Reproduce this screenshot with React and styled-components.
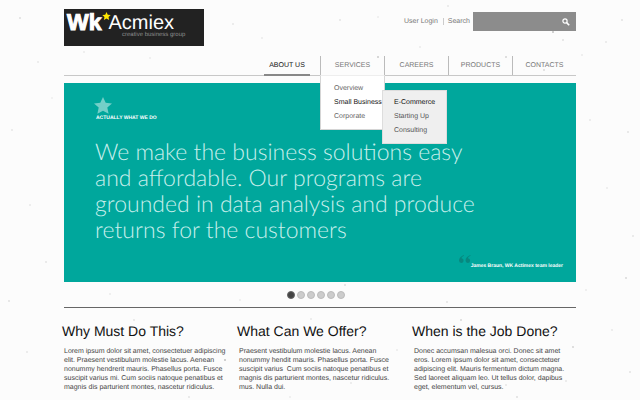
import React from "react";
import styled, { createGlobalStyle, css } from "styled-components";

const teal = "#00a79c";

const specks = [
  [20, 18, 30], [38, 62, 20], [12, 130, 22], [52, 98, 14], [30, 205, 20], [46, 262, 24], [9, 301, 28],
  [27, 352, 22], [134, 320, 24], [225, 360, 60], [150, 58, 16], [233, 24, 22], [262, 38, 18], [340, 20, 24],
  [378, 57, 50], [378, 17, 16], [420, 47, 18], [506, 57, 40], [544, 70, 34], [553, 32, 60], [563, 40, 28],
  [582, 55, 18], [606, 42, 22], [622, 20, 26], [590, 120, 20], [628, 132, 26], [607, 188, 18], [633, 236, 24],
  [626, 278, 36], [586, 290, 18], [447, 302, 26], [345, 285, 30], [311, 319, 20], [461, 320, 36], [552, 359, 60],
  [573, 347, 40], [566, 381, 22], [517, 397, 30], [506, 385, 22], [189, 397, 24], [351, 383, 20], [397, 350, 18],
  [612, 330, 20], [630, 372, 26], [240, 300, 16], [110, 294, 18], [84, 52, 18], [290, 397, 16], [448, 6, 22],
].map(([x, y, a]) => `radial-gradient(circle at ${x}px ${y}px, rgba(0,0,0,${a / 100}) 0, transparent 1px)`).join(",");

const GlobalStyle = createGlobalStyle`
  * { box-sizing: border-box; }
  body {
    margin: 0;
    min-height: 100vh;
    overflow: hidden;
    background: ${specks}, #fcfcfc;
    color: #444;
    font: 7px/9px "Liberation Sans", Arial, sans-serif;
    text-rendering: geometricPrecision;
  }
  ul { list-style: none; margin: 0; padding: 0; }
  a { color: inherit; text-decoration: none; }
  h1, h2, p { margin: 0; font-weight: 400; }
`;

const Page = styled.div`
  max-width: 512px;
  margin: 0 auto;
  padding-top: 9px;
`;

const Header = styled.header`
  display: flex;
  justify-content: space-between;
  align-items: flex-start;
`;

const Logo = styled.a`
  width: 140px;
  height: 37px;
  background: #222;
  color: #fff;
`;

const LogoName = styled.span`
  display: flex;
  align-items: flex-start;
  padding: 3px 0 0 3px;
  font-size: 20px;
  line-height: 22px;
  svg { width: 9px; height: 8px; margin-right: -2px; }
`;

const LogoMark = styled.b`
  font-size: 23px;
  line-height: 20px;
  font-weight: 700;
  -webkit-text-stroke: 1px #fff;
`;

const LogoTag = styled.small`
  display: block;
  padding-left: 58px;
  font-size: 6px;
  line-height: 3px;
  color: #8d8d8d;
`;

const Tools = styled.form`
  display: flex;
  align-items: center;
  margin-top: 3px;
  color: #777;
`;

const ToolLabel = styled.label`
  margin: 0 3px 0 5px;
  padding-left: 4px;
  border-left: 1px solid #ccc;
  line-height: 7px;
`;

const LoginLink = styled.a``;

const SearchBox = styled.span`
  display: flex;
  width: 103px;
  height: 19px;
  background: #8c8c8c;
`;

const SearchInput = styled.input`
  flex: 1;
  min-width: 0;
  border: 0;
  padding: 0 5px;
  background: none;
  color: #fff;
  font: inherit;
  outline: none;
`;

const SearchButton = styled.button`
  display: grid;
  place-items: center;
  width: 20px;
  border: 0;
  padding: 0;
  background: none;
  svg { width: 8px; height: 8px; }
`;

const Nav = styled.nav`
  margin-top: 10px;
  border-bottom: 1px solid #c8c8c8;
`;

const NavList = styled.ul`
  display: flex;
  justify-content: flex-end;
`;

const NavItem = styled.li`
  position: relative;
  width: ${(p) => p.$width || 64}px;
  height: 19px;
  line-height: 19px;
  text-align: center;
  color: #777;
  ${(p) => !p.$current && css`border-left: 1px solid #bbb;`}
  ${(p) => p.$current && css`
    margin: 0 10px -1px 0;
    height: 20px;
    color: #111;
    border-bottom: 2px solid #888;
  `}
`;

const Menu = styled.ul`
  position: absolute;
  z-index: 2;
  top: 19px;
  left: -1px;
  width: 65px;
  padding: 6px 0 5px 13px;
  background: #fff;
  border: 1px solid #d5d5d5;
  border-top-color: #eee;
  text-align: left;
`;

const SubMenu = styled(Menu)`
  top: -6px;
  left: 48px;
  padding: 5px 0 5px 11px;
  background: #efefef;
  border-color: #ddd;
  li { color: #555; }
  li:first-child { color: #111; }
`;

const MenuItem = styled.li`
  position: relative;
  line-height: 14px;
  white-space: nowrap;
  color: ${(p) => (p.$active ? "#111" : "#666")};
`;

const Banner = styled.section`
  margin-top: 7px;
  padding: 14px 13px 11px 31px;
  background: ${teal};
  color: #fff;
`;

const BannerStar = styled.svg`
  display: block;
  width: 18px;
  height: 17px;
  margin-left: -1px;
`;

const BannerLabel = styled.p`
  padding-left: 1px;
  font-size: 5px;
  line-height: 8px;
  font-weight: 700;
`;

const Slogan = styled.h1`
  margin-top: 16px;
  font: 300 23px/26px Lato, sans-serif;
  color: #c9efec;
  white-space: nowrap;
`;

const Author = styled.p`
  display: flex;
  justify-content: flex-end;
  align-items: flex-end;
  margin-top: 13px;
  font-size: 5px;
  line-height: 9px;
  font-weight: 700;
  svg { width: 12px; height: 8px; margin-bottom: 8px; }
`;

const Pager = styled.div`
  display: flex;
  justify-content: center;
  gap: 2px;
  padding: 9px 0 8px;
  margin-left: -9px;
`;

const Dot = styled.button`
  width: 8px;
  height: 8px;
  padding: 0;
  border: 1px solid ${(p) => (p.$on ? "#666" : "#bbb")};
  border-radius: 50%;
  background: ${(p) => (p.$on ? "#444" : "#ccc")};
`;

const Columns = styled.main`
  display: grid;
  grid-template-columns: repeat(3, 1fr);
  gap: 13px;
  padding-top: 15px;
  border-top: 1px solid #666;
`;

const Column = styled.article`
  white-space: nowrap;
`;

const Title = styled.h2`
  margin: 0 0 8px -2px;
  font-size: 14px;
  line-height: 16px;
  color: #111;
`;

const Star = ({ color }) => (
  <path fill={color} d="M9 0l2.7 5.7 6.3.7-4.7 4.2 1.3 6.2L9 13.7l-5.6 3.1 1.3-6.2L0 6.4l6.3-.7z" />
);

const Lines = ({ items }) => items.map((line, i) => (
  <React.Fragment key={line}>{i > 0 && <br />}{line}</React.Fragment>
));

const columns = [
  ["Why Must Do This?", [
    "Lorem ipsum dolor sit amet, consectetuer adipiscing",
    "elit. Praesent vestibulum molestie lacus. Aenean",
    "nonummy hendrerit mauris. Phasellus porta. Fusce",
    "suscipit varius mi. Cum sociis natoque penatibus et",
    "magnis dis parturient montes, nascetur ridiculus.",
  ]],
  ["What Can We Offer?", [
    "Praesent vestibulum molestie lacus. Aenean",
    "nonummy hendit mauris. Phasellus porta. Fusce",
    "suscipit varius \u00a0Cum sociis natoque penatibus et",
    "magnis dis parturient montes, nascetur ridiculus.",
    "mus. Nulla dui.",
  ]],
  ["When is the Job Done?", [
    "Donec accumsan malesua orci. Donec sit amet",
    "eros. Lorem ipsum dolor sit amet, consectetuer",
    "adipiscing elit. Mauris fermentum dictum magna.",
    "Sed laoreet aliquam leo. Ut tellus dolor, dapibus",
    "eget, elementum vel, cursus.",
  ]],
];

export default function App() {
  return (
    <>
      <GlobalStyle />
      <Page>
        <Header>
          <Logo href="#">
            <LogoName>
              <LogoMark>Wk</LogoMark>
              <svg viewBox="0 0 18 17"><Star color="#ffe800" /></svg>
              Acmiex
            </LogoName>
            <LogoTag>creative business group</LogoTag>
          </Logo>
          <Tools>
            <LoginLink href="#">User Login</LoginLink>
            <ToolLabel htmlFor="search">Search</ToolLabel>
            <SearchBox>
              <SearchInput id="search" type="text" />
              <SearchButton type="button" aria-label="Search">
                <svg viewBox="0 0 8 8" fill="none" stroke="#fff">
                  <circle cx="3" cy="3" r="2.1" strokeWidth="1.2" />
                  <path d="M4.6 4.6L7.2 7.2" strokeWidth="1.6" />
                </svg>
              </SearchButton>
            </SearchBox>
          </Tools>
        </Header>
        <Nav>
          <NavList>
            <NavItem $current $width={46}><a href="#">ABOUT US</a></NavItem>
            <NavItem>
              <a href="#">SERVICES</a>
              <Menu>
                <MenuItem><a href="#">Overview</a></MenuItem>
                <MenuItem $active>
                  <a href="#">Small Business</a>
                  <SubMenu>
                    <MenuItem><a href="#">E-Commerce</a></MenuItem>
                    <MenuItem><a href="#">Starting Up</a></MenuItem>
                    <MenuItem><a href="#">Consulting</a></MenuItem>
                  </SubMenu>
                </MenuItem>
                <MenuItem><a href="#">Corporate</a></MenuItem>
              </Menu>
            </NavItem>
            <NavItem><a href="#">CAREERS</a></NavItem>
            <NavItem><a href="#">PRODUCTS</a></NavItem>
            <NavItem><a href="#">CONTACTS</a></NavItem>
          </NavList>
        </Nav>
        <Banner>
          <BannerStar viewBox="0 0 18 17"><Star color="#74cfc8" /></BannerStar>
          <BannerLabel>ACTUALLY WHAT WE DO</BannerLabel>
          <Slogan>
            <Lines items={[
              "We make the business solutions easy",
              "and affordable. Our programs are",
              "grounded in data analysis and produce",
              "returns for the customers",
            ]} />
          </Slogan>
          <Author>
            <svg viewBox="0 0 12 8" fill="#07887f">
              <path d="M5 0C2 1 0 3 0 5.600a2.300 2.300 0 1 0 2.500-2.300C2.700 2 3.700 1.200 5 .8zM11.500 0c-3 1-5 3-5 5.600a2.300 2.300 0 1 0 2.500-2.300c.2-1.300 1.200-2.100 2.500-2.500z" />
            </svg>
            James Braun, WK Actimex team leader
          </Author>
        </Banner>
        <Pager>
          {[1, 2, 3, 4, 5, 6].map((n) => <Dot key={n} $on={n === 1} aria-label={`Slide ${n}`} />)}
        </Pager>
        <Columns>
          {columns.map(([title, lines]) => (
            <Column key={title}>
              <Title>{title}</Title>
              <p><Lines items={lines} /></p>
            </Column>
          ))}
        </Columns>
      </Page>
    </>
  );
}
